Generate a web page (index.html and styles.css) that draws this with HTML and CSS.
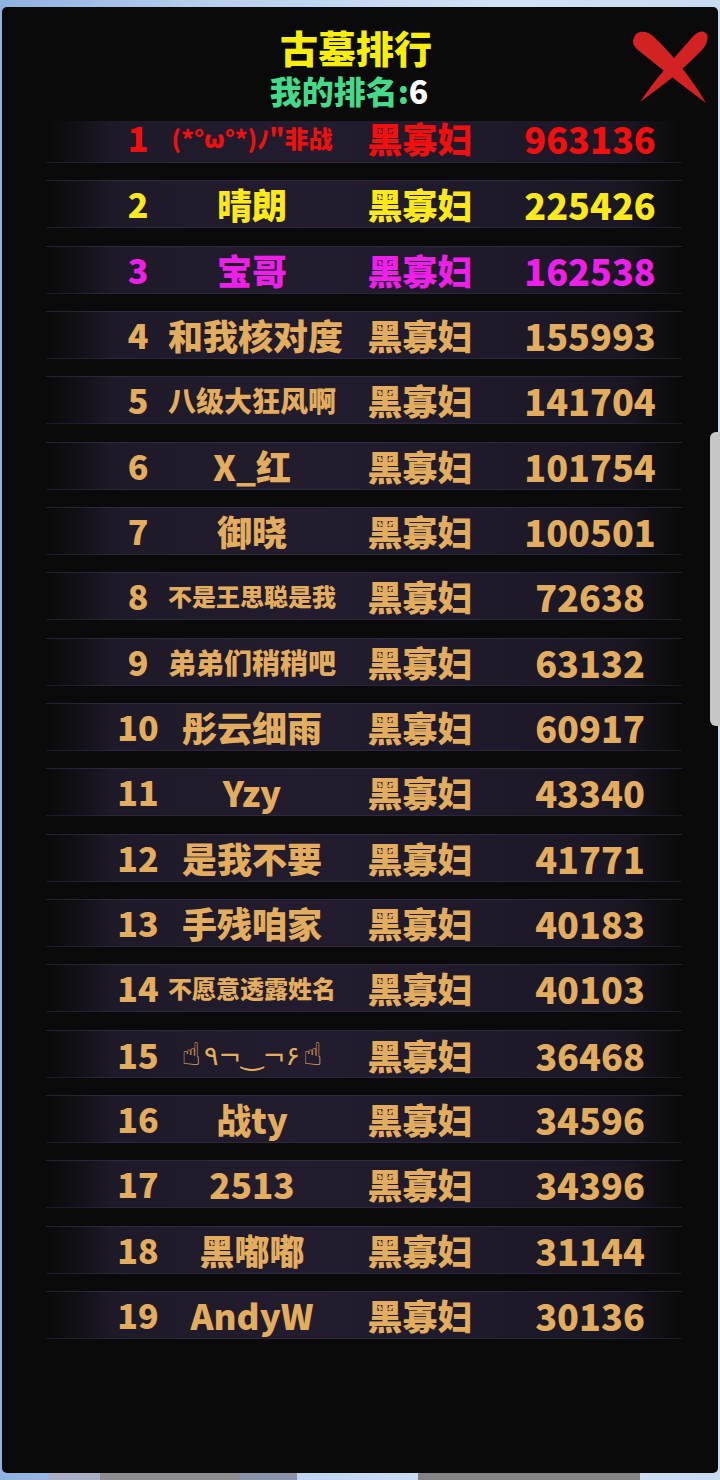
FILE: index.html
```html
<!DOCTYPE html>
<html lang="zh-CN">
<head>
    <meta charset="UTF-8">
    <meta name="viewport" content="width=device-width, initial-scale=1.0">
    <title>古墓排行</title>
    <link rel="stylesheet" href="styles.css">
</head>
<body>

<div class="scene">
    <div class="rock rock-a"></div>
    <div class="rock rock-b"></div>
    <div class="rock rock-c"></div>
    <div class="rock rock-d"></div>
</div>

<div class="panel">
    <div class="header">
        <div class="title">古墓排行</div>
        <div class="my-rank">我的排名:<span class="my-rank-num">6</span></div>
    </div>

    <!-- 닫기 버튼 -->
    <div class="close-btn">
        <svg viewBox="0 0 100 100" width="100" height="100">
            <path d="M14,18 C16,10 27,10 34,17 C52,34 70,56 86,83 C66,68 40,48 18,30 C13,26 12,21 14,18 Z" fill="#d32222"/>
            <path d="M86,13 C90,18 86,27 79,33 C61,51 41,67 20,82 C34,61 52,40 70,20 C75,13 81,9 86,13 Z" fill="#d32222"/>
        </svg>
    </div>

    <div class="list">
        <div class="row first top1"><span class="rank">1</span><span class="name xs">(*°ω°*)ﾉ"非战</span><span class="role">黑寡妇</span><span class="score">963136</span></div>
        <div class="row top2"><span class="rank">2</span><span class="name">晴朗</span><span class="role">黑寡妇</span><span class="score">225426</span></div>
        <div class="row top3"><span class="rank">3</span><span class="name">宝哥</span><span class="role">黑寡妇</span><span class="score">162538</span></div>
        <div class="row"><span class="rank">4</span><span class="name">和我核对度</span><span class="role">黑寡妇</span><span class="score">155993</span></div>
        <div class="row"><span class="rank">5</span><span class="name sm">八级大狂风啊</span><span class="role">黑寡妇</span><span class="score">141704</span></div>
        <div class="row"><span class="rank">6</span><span class="name">X_红</span><span class="role">黑寡妇</span><span class="score">101754</span></div>
        <div class="row"><span class="rank">7</span><span class="name">御晓</span><span class="role">黑寡妇</span><span class="score">100501</span></div>
        <div class="row"><span class="rank">8</span><span class="name xs">不是王思聪是我</span><span class="role">黑寡妇</span><span class="score">72638</span></div>
        <div class="row"><span class="rank">9</span><span class="name sm">弟弟们稍稍吧</span><span class="role">黑寡妇</span><span class="score">63132</span></div>
        <div class="row"><span class="rank">10</span><span class="name">彤云细雨</span><span class="role">黑寡妇</span><span class="score">60917</span></div>
        <div class="row"><span class="rank">11</span><span class="name">Yzy</span><span class="role">黑寡妇</span><span class="score">43340</span></div>
        <div class="row"><span class="rank">12</span><span class="name">是我不要</span><span class="role">黑寡妇</span><span class="score">41771</span></div>
        <div class="row"><span class="rank">13</span><span class="name">手残咱家</span><span class="role">黑寡妇</span><span class="score">40183</span></div>
        <div class="row"><span class="rank">14</span><span class="name xs">不愿意透露姓名</span><span class="role">黑寡妇</span><span class="score">40103</span></div>
        <div class="row"><span class="rank">15</span><span class="name kao"><b class="hand">☝</b>٩¬‿¬۶<b class="hand">☝</b></span><span class="role">黑寡妇</span><span class="score">36468</span></div>
        <div class="row"><span class="rank">16</span><span class="name">战ty</span><span class="role">黑寡妇</span><span class="score">34596</span></div>
        <div class="row"><span class="rank">17</span><span class="name">2513</span><span class="role">黑寡妇</span><span class="score">34396</span></div>
        <div class="row"><span class="rank">18</span><span class="name">黑嘟嘟</span><span class="role">黑寡妇</span><span class="score">31144</span></div>
        <div class="row"><span class="rank">19</span><span class="name">AndyW</span><span class="role">黑寡妇</span><span class="score">30136</span></div>
    </div>
</div>

<div class="scrollbar"></div>

</body>
</html>
```

FILE: styles.css
```css
body {
    margin: 0;
    width: 720px;
    height: 1480px;
    overflow: hidden;
    position: relative;
    background: linear-gradient(90deg, #8fb2df 0%, #b9cfee 30%, #d3e2f4 70%, #c9dbf1 100%);
    font-family: "Noto Sans CJK SC", "Noto Sans", "DejaVu Sans", sans-serif;
    font-weight: 900;
}
.scene {
    position: absolute;
    left: 0;
    right: 0;
    bottom: 0;
    height: 20px;
}
.rock {
    position: absolute;
    bottom: 0;
    height: 14px;
}
.rock-a { left: 48px; width: 52px; background: #a9afc4; }
.rock-b { left: 100px; width: 140px; background: #8e8e92; }
.rock-c { left: 240px; width: 57px; background: #8a93a8; }
.rock-d { left: 418px; width: 222px; background: #858585; }

.panel {
    position: relative;
    margin: 7px 2px;
    height: 1466px;
    background-color: #0a0a0a;
    border-radius: 5px;
    overflow: hidden;
}
.header {
    padding-top: 20px;
    text-align: center;
}
.title {
    font-size: 38px;
    line-height: 40px;
    color: #f7ee0a;
    padding-right: 8px;
}
.my-rank {
    margin-top: 7px;
    font-size: 32px;
    line-height: 32px;
    color: #45d98a;
    padding-right: 22px;
}
.my-rank-num {
    color: #ffffff;
}
.close-btn {
    position: absolute;
    left: 618px;
    top: 13px;
    width: 100px;
    height: 100px;
}
.close-btn svg {
    display: block;
}

.list {
    margin-top: 15px;
    display: flex;
    flex-direction: column;
    gap: 17.33px;
}
.row {
    margin-left: 44px;
    width: 636px;
    height: 48px;
    box-sizing: border-box;
    padding-left: 62px;
    display: grid;
    grid-template-columns: 60px 168px 168px 172px;
    align-items: center;
    text-align: center;
    color: #e2ad5f;
    background:
        linear-gradient(90deg, rgba(10,10,10,1) 0%, rgba(10,10,10,0) 10%, rgba(10,10,10,0) 92%, rgba(10,10,10,1) 100%),
        linear-gradient(90deg, #17141d 0%, #1f1a29 12%, #221c2e 40%, #1f1a2a 70%, #1b1724 88%, #15121a 100%);
    box-shadow: inset 0 1px 0 rgba(70, 60, 95, 0.45), inset 0 -1px 0 rgba(70, 60, 95, 0.35);
}
.row span {
    white-space: nowrap;
    line-height: 48px;
}
/* 첫 줄은 스크롤 영역 위쪽에 살짝 잘려 있음 */
.row.first {
    height: 42px;
    align-items: start;
    box-shadow: inset 0 -1px 0 rgba(70, 60, 95, 0.35);
}
.row.first span {
    line-height: 34px;
}
.rank {
    font-size: 34px;
}
.name {
    font-size: 35px;
}
.name.sm {
    font-size: 28px;
}
.name.xs {
    font-size: 24px;
}
.name.kao {
    font-family: "DejaVu Sans", "Noto Sans CJK SC", sans-serif;
    font-size: 27px;
    font-weight: 400;
}
.hand {
    font-weight: 400;
    font-size: 32px;
    margin: 0 3px;
}
.role {
    font-size: 35px;
}
.score {
    font-size: 36px;
}
.top1 { color: #f20f0f; }
.top2 { color: #fbe91c; }
.top3 { color: #ef1fea; }

.scrollbar {
    position: absolute;
    left: 710px;
    top: 432px;
    width: 12px;
    height: 294px;
    background: #c6c6c6;
    border-radius: 6px 0 0 6px;
}
```
